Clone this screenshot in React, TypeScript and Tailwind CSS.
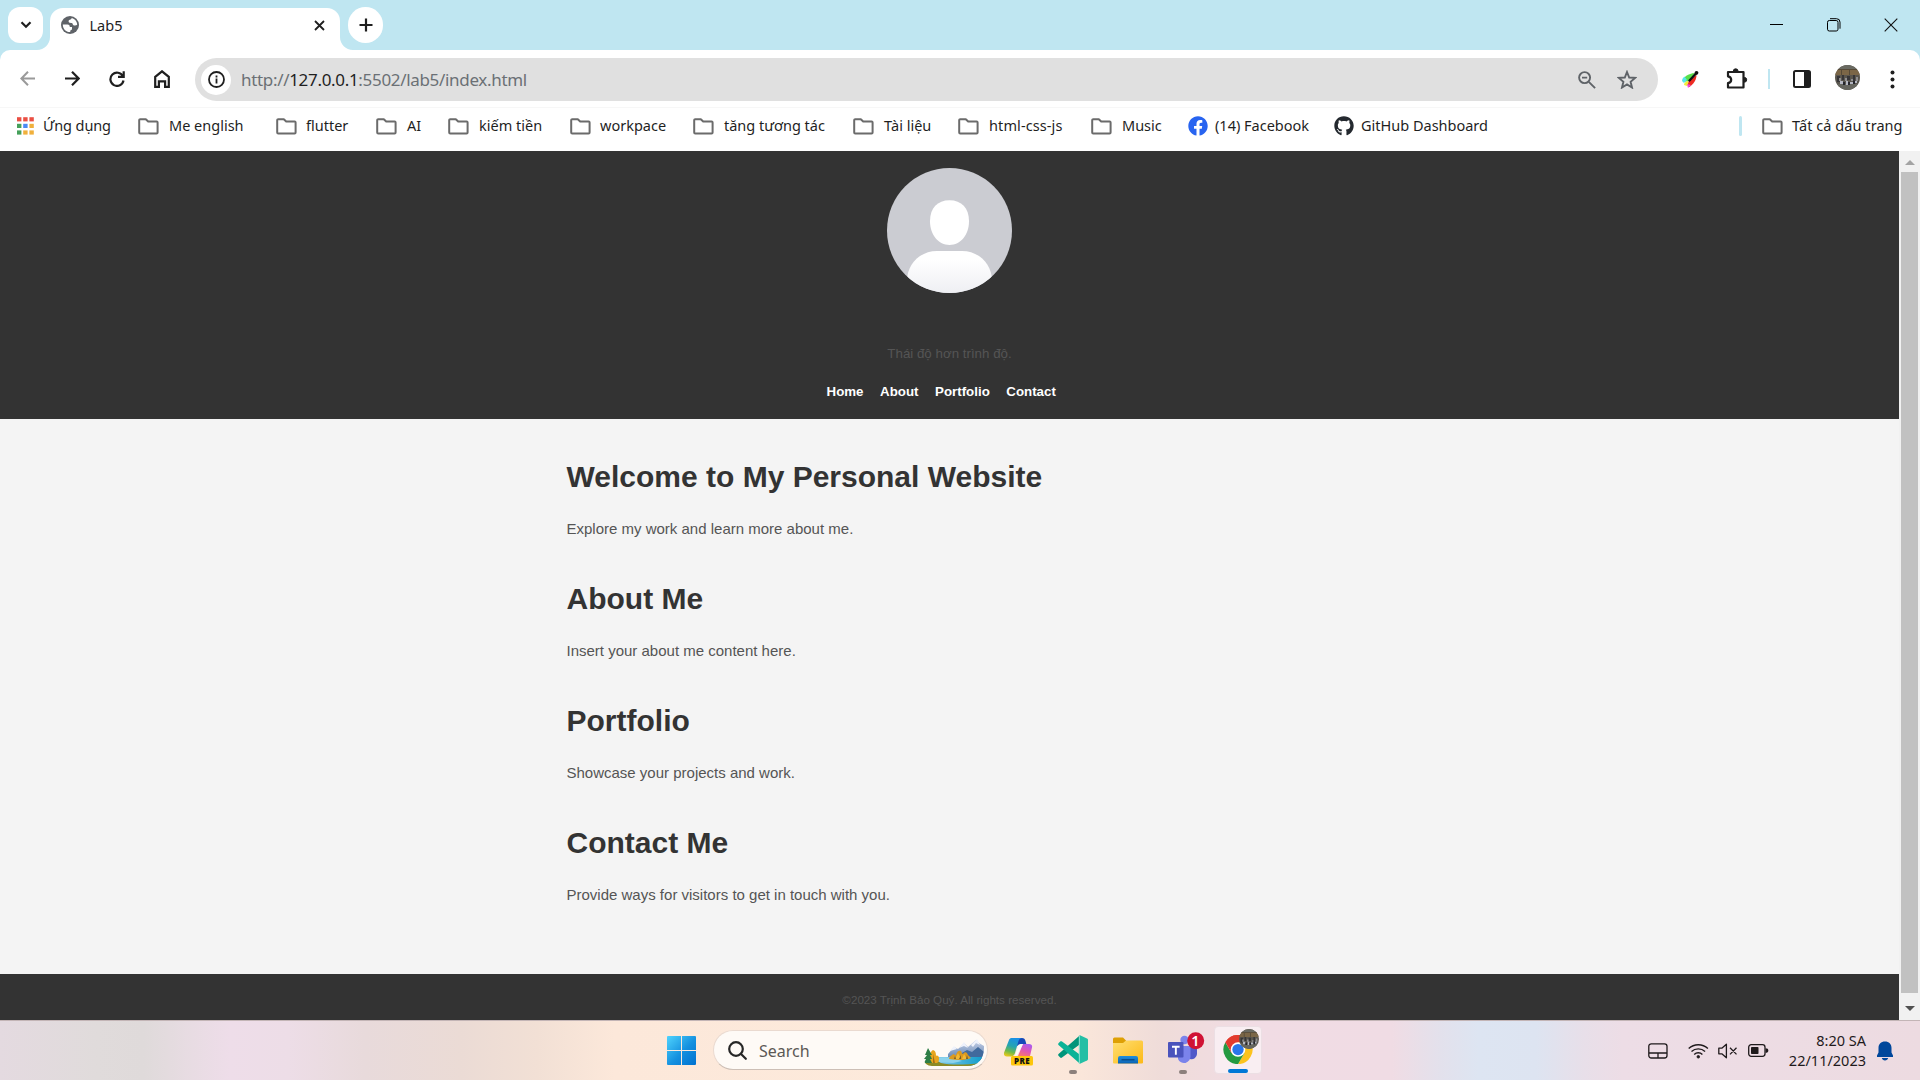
import React from "react";
import { FaFacebook, FaGithub } from "react-icons/fa";

const UI = "font-['Noto_Sans','Open_Sans',sans-serif]";

function Folder() {
  return (
    <svg width="21" height="17" viewBox="0 0 21 17" className="shrink-0" fill="none" stroke="#6b6b6b" strokeWidth="2" strokeLinejoin="round">
      <path d="M1.2 2.2a1 1 0 0 1 1-1h5.6l2.4 2.3h8.4a1 1 0 0 1 1 1v10a1 1 0 0 1-1 1H2.2a1 1 0 0 1-1-1z" />
    </svg>
  );
}

function AppsIcon() {
  const colors = ["#ea4f43", "#ea4f43", "#ea4f43", "#45a05a", "#4a8af4", "#f0b03c", "#45a05a", "#f0b03c", "#f0b03c"];
  return (
    <svg width="17" height="18" viewBox="0 0 17 18" className="shrink-0">
      {colors.map((c, i) => (
        <rect key={i} x={(i % 3) * 6.2} y={Math.floor(i / 3) * 6.6 + 0.2} width="4.4" height="4.2" fill={c} />
      ))}
    </svg>
  );
}

function Globe() {
  return (
    <svg className="mt-[8px]" width="18" height="18" viewBox="0 0 18 18">
      <circle cx="9" cy="9" r="9" fill="#5f6368" />
      <path d="M1.800 8.500h4.700c1.800 0 2.300 1 2.300 2.500H11v2.800c-1.200 0-1.800.6-1.800 2.300-4.200.2-7.400-3.200-7.400-7.600z" fill="#fff" />
      <path d="M10.800 2c3.200.8 5.300 3.600 5.400 6.700-.9 1-3.300 1.200-4.200 0-.4-.6-.3-1.500-1.200-1.700-1.300-.2-3.200.3-3.200-1.700 0-1.300 1-1.500 1.900-1.700.6-.2.900-.8 1.300-1.600z" fill="#fff" />
    </svg>
  );
}

type Mark = { label: string; icon: "apps" | "folder" | "fb" | "gh"; box: string; text: string };

const marks: Mark[] = [
  { label: "Ứng dụng", icon: "apps", box: "w-[121px] gap-[9px]", text: "tracking-[-0.1px]" },
  { label: "Me english", icon: "folder", box: "w-[138px] gap-[10px]", text: "" },
  { label: "flutter", icon: "folder", box: "w-[100px] gap-[9px]", text: "" },
  { label: "AI", icon: "folder", box: "w-[72px] gap-[10px]", text: "" },
  { label: "kiếm tiền", icon: "folder", box: "w-[122px] gap-[10px]", text: "" },
  { label: "workpace", icon: "folder", box: "w-[123px] gap-[9px]", text: "" },
  { label: "tăng tương tác", icon: "folder", box: "w-[160px] gap-[10px]", text: "" },
  { label: "Tài liệu", icon: "folder", box: "w-[105px] gap-[10px]", text: "" },
  { label: "html-css-js", icon: "folder", box: "w-[133px] gap-[10px]", text: "tracking-[0.1px]" },
  { label: "Music", icon: "folder", box: "w-[97px] gap-[10px]", text: "" },
  { label: "(14) Facebook", icon: "fb", box: "w-[146px] gap-[7px]", text: "" },
  { label: "GitHub Dashboard", icon: "gh", box: "gap-[7px]", text: "" },
];

function Bookmark({ m }: { m: Mark }) {
  return (
    <div className={`flex shrink-0 items-center whitespace-nowrap ${m.box}`}>
      {m.icon === "apps" && <AppsIcon />}
      {m.icon === "folder" && <Folder />}
      {m.icon === "fb" && <FaFacebook size={20} color="#2864f0" className="shrink-0" />}
      {m.icon === "gh" && <FaGithub size={20} color="#24292f" className="shrink-0" />}
      <span className={m.text}>{m.label}</span>
    </div>
  );
}

function TabStrip() {
  return (
    <div className="flex h-[50px] items-start bg-[#bfe6f1] pl-2">
      <button className="mt-[7px] flex h-9 w-[35px] items-center justify-center rounded-[12px] bg-white">
        <svg width="12" height="8" viewBox="0 0 12 8" fill="none" stroke="#1f1f1f" strokeWidth="2.2">
          <path d="M1.5 1.3 6 5.8l4.500-4.500" />
        </svg>
      </button>
      <div className="relative ml-[7px] mt-[8px] flex h-[42px] w-[290px] items-start rounded-t-[13px] bg-white pl-[11px]">
        <svg className="absolute -left-[13px] bottom-0" width="13" height="13" viewBox="0 0 13 13">
          <path d="M13 0v13H0C7.200 13 13 7.200 13 0z" fill="#fff" />
        </svg>
        <svg className="absolute -right-[13px] bottom-0" width="13" height="13" viewBox="0 0 13 13">
          <path d="M0 0v13h13C5.800 13 0 7.200 0 0z" fill="#fff" />
        </svg>
        <Globe />
        <span className="ml-[10.500px] mt-[7px] text-[14.500px] leading-5 text-[#1f1f1f]">Lab5</span>
        <svg className="ml-auto mr-[15px] mt-[11.500px]" width="11" height="11" viewBox="0 0 11 11" stroke="#1f1f1f" strokeWidth="1.800">
          <path d="m1 1 9 9M10 1l-9 9" />
        </svg>
      </div>
      <button className="relative ml-2 mt-[7px] flex h-9 w-[35px] items-center justify-center rounded-full bg-white">
        <svg width="14" height="14" viewBox="0 0 14 14" stroke="#1f1f1f" strokeWidth="2.200">
          <path d="M7 .5v13M.5 7h13" />
        </svg>
      </button>
      <div className="ml-auto mr-[22px] mt-[18px] flex items-center gap-[43px]">
        <svg width="14" height="14" viewBox="0 0 14 14" stroke="#000" strokeWidth="1">
          <path d="M0 6.500h13" />
        </svg>
        <svg width="14" height="14" viewBox="0 0 14 14" fill="none" stroke="#000" strokeWidth="1">
          <rect x=".5" y="2.500" width="10.500" height="10.500" rx="1.800" />
          <path d="M3 .7h6.500a3.500 3.500 0 0 1 3.500 3.500v6.500" />
        </svg>
        <svg width="14" height="14" viewBox="0 0 14 14" stroke="#111" strokeWidth="1.100">
          <path d="m.7.7 12.600 12.600M13.300.7.7 13.300" />
        </svg>
      </div>
    </div>
  );
}

function ProfilePhoto({ className }: { className: string }) {
  return (
    <svg viewBox="0 0 25 25" className={className}>
      <defs>
        <clipPath id="photoClip">
          <circle cx="12.5" cy="12.5" r="12.5" />
        </clipPath>
      </defs>
      <g clipPath="url(#photoClip)">
        <rect width="25" height="25" fill="#5a564e" />
        <rect width="25" height="5" fill="#6a6a62" />
        <rect y="4" width="25" height="6" fill="#7b6647" />
        <path d="M0 4h25v1H0zM6 5h1v5H6zM14 5h1v5h-1z" fill="#564a38" />
        <path d="M2 11h3v6H2zM7 10h2v5H7zM12 11h3v4h-3zM18 10h2v6h-2z" fill="#373638" />
        <path d="M4 13h2v3H4zM10 13h2v3h-2zM16 14h2v2h-2zM21 12h2v4h-2z" fill="#8f8e90" />
        <path d="M0 19h25v6H0z" fill="#66665f" />
        <path d="M5 16h3v3H5zM11 16h2v4h-2zM15 17h3v2h-3zM20 16h2v2h-2z" fill="#b5b7c2" />
        <path d="M8 17h2v3H8zM13 17h2v3h-2zM18 16h2v3h-2z" fill="#25262d" />
      </g>
    </svg>
  );
}

function Toolbar() {
  return (
    <div className="bg-[#bfe6f1]">
      <div className="flex h-[57px] items-center rounded-t-[10px] bg-white pl-5">
        <div className="flex w-[175px] shrink-0 items-center">
          <svg width="15" height="15" viewBox="0 0 15 15" fill="none" stroke="#9a9a9a" strokeWidth="2">
            <path d="M15 7.500H1.500M8 .8 1.400 7.500 8 14.200" />
          </svg>
          <svg className="ml-[30px]" width="15" height="15" viewBox="0 0 15 15" fill="none" stroke="#1f1f1f" strokeWidth="2.200">
            <path d="M0 7.500h13.500M7 .8l6.600 6.700L7 14.200" />
          </svg>
          <svg className="ml-[29px]" width="16" height="16" viewBox="0 0 16 16" fill="none" stroke="#1f1f1f" strokeWidth="2.200">
            <path d="M13.900 5.300A6.600 6.600 0 1 0 14.500 9.500M14.700.3v5.600H9" />
          </svg>
          <svg className="ml-[29px]" width="16" height="18" viewBox="0 0 16 18" fill="none" stroke="#1f1f1f" strokeWidth="2.200">
            <path d="M1.200 6.800 8 1.300l6.800 5.500v10h-3.700v-5.500H4.900v5.500H1.200z" />
          </svg>
        </div>
        <div className="mt-[2px] flex h-[43px] w-[1463px] shrink-0 items-center rounded-full bg-[#e0e0e0] pl-[6px]">
          <div className="flex h-[30px] w-[30px] items-center justify-center rounded-full bg-white">
            <svg width="17" height="17" viewBox="0 0 17 17" fill="none" stroke="#1f1f1f" strokeWidth="1.800">
              <circle cx="8.500" cy="8.500" r="7.500" />
              <path d="M8.500 7.500v5M8.500 4.500v1.900" />
            </svg>
          </div>
          <span className="ml-[10px] whitespace-nowrap text-[17px] tracking-[-0.32px] text-[#6b7075]">
            http://<span className="text-[#1f1f1f]">127.0.0.1</span>:5502/lab5/index.html
          </span>
          <svg className="ml-auto" width="18" height="18" viewBox="0 0 18 18" fill="none" stroke="#5f6368" strokeWidth="1.900">
            <circle cx="6.600" cy="6.600" r="5.500" />
            <path d="m10.800 10.800 6.300 6.300M4 6.600h5.200" />
          </svg>
          <svg className="ml-[21px] mr-[21px]" width="20" height="19" viewBox="0 0 20 19" fill="none" stroke="#5f6368" strokeWidth="1.900">
            <path d="m10 2 2.200 5.500 5.900.4-4.500 3.900 1.400 5.700-5-3.100-5 3.100 1.400-5.700-4.500-3.900 5.900-.4z" />
          </svg>
        </div>
        <div className="mt-[1px] flex items-center pl-[23px]">
          <svg width="18" height="18" viewBox="0 0 18 18">
            <path d="M2 12C2 7 7 3.500 14 3L8 11z" fill="#59e04a" />
            <path d="M1 11c0-2 1-3 2.500-4.500L6 10l-3 3z" fill="#56e6e8" />
            <path d="M3 15c0-2 1-3 4-4l1 3-2 2z" fill="#f2ee3a" />
            <path d="M8 11 15.500 5c0 5-3 9-7 12-2 0-2-3-.5-6z" fill="#ee2b22" />
            <path d="M6 14l4 1-3 3z" fill="#f04ae0" />
            <path d="M15.500 3 8.500 10.500" stroke="#111" strokeWidth="2.400" strokeLinecap="round" />
            <circle cx="15.500" cy="2.800" r="1.900" fill="#111" />
          </svg>
          <svg className="ml-[27px]" width="22" height="22" viewBox="0 0 22 22" fill="none" stroke="#1f1f1f" strokeWidth="2.200" strokeLinejoin="round">
            <path d="M2 4h15.500v15.500H2v-4.300c2-.4 3.200-1.600 3.200-3.400S4 8.700 2 8.300z" />
            <path d="M7.300 3.200a2.400 2.400 0 0 1 4.800 0zM18.300 9.400a2.400 2.400 0 0 1 0 4.800z" fill="#1f1f1f" strokeWidth="1" />
          </svg>
          <div className="ml-5 h-5 w-[2px] bg-[#bfe6f1]" />
          <svg className="ml-[23px]" width="18" height="18" viewBox="0 0 18 18">
            <rect x="1" y="1" width="16" height="16" rx="1.500" fill="none" stroke="#1f1f1f" strokeWidth="2" />
            <path d="M11 1h6v16h-6z" fill="#1f1f1f" />
          </svg>
          <ProfilePhoto className="-mt-[3px] ml-6 h-[25px] w-[25px]" />
          <svg className="ml-[30px]" width="5" height="19" viewBox="0 0 5 19" fill="#1f1f1f">
            <circle cx="2.500" cy="2.500" r="2" />
            <circle cx="2.500" cy="9.500" r="2" />
            <circle cx="2.500" cy="16.500" r="2" />
          </svg>
        </div>
      </div>
    </div>
  );
}

function BookmarksBar() {
  return (
    <div className="flex h-11 items-center border-t border-[#f7f7f7] bg-white pb-[7px] pl-[17px] pr-[17px] text-[14.500px] text-[#1f1f1f]">
      {marks.map((m) => (
        <Bookmark key={m.label} m={m} />
      ))}
      <div className="ml-auto flex items-center whitespace-nowrap">
        <div className="mr-5 h-5 w-[3px] rounded bg-[#bfe6f1]" />
        <Folder />
        <span className="ml-[9px] w-[111px] tracking-[0.060px]">Tất cả dấu trang</span>
      </div>
    </div>
  );
}

function Avatar() {
  return (
    <svg width="125" height="125" viewBox="0 0 125 125">
      <defs>
        <clipPath id="avatarClip">
          <circle cx="62.5" cy="62.5" r="62.5" />
        </clipPath>
        <linearGradient id="body" x1="0" y1="0" x2="0" y2="1">
          <stop offset=".2" stopColor="#fff" />
          <stop offset="1" stopColor="#eeeff3" />
        </linearGradient>
      </defs>
      <g clipPath="url(#avatarClip)">
        <rect width="125" height="125" fill="#cbccd2" />
        <path d="M62.500 32.300c12 0 19.500 7.700 19.500 21 0 13.500-8.500 23.700-19.500 23.700S43 66.800 43 53.300c0-13.300 7.500-21 19.500-21z" fill="#fff" />
        <path d="M20 125v-12c0-17 13-30 30-30h25c17 0 30 13 30 30v12z" fill="url(#body)" />
      </g>
    </svg>
  );
}

const sections = [
  ["Welcome to My Personal Website", "Explore my work and learn more about me."],
  ["About Me", "Insert your about me content here."],
  ["Portfolio", "Showcase your projects and work."],
  ["Contact Me", "Provide ways for visitors to get in touch with you."],
];

function WebPage() {
  return (
    <div className="flex w-[1899px] flex-col bg-[#f4f4f4] font-['Liberation_Sans',Arial,sans-serif]">
      <header className="flex h-[268px] flex-col items-center bg-[#333] pt-[17px]">
        <Avatar />
        <p className="mt-[51px] text-[13.330px] leading-5 text-[#555]">Thái độ hơn trình độ.</p>
        <nav className="mt-[18px] flex text-[13.300px] font-bold leading-5 text-white">
          {["Home", "About", "Portfolio", "Contact"].map((n) => (
            <a key={n} className="mr-[16.600px]">{n}</a>
          ))}
        </nav>
      </header>
      <main className="flex grow flex-col gap-10 pl-[566.500px] pt-10">
        {sections.map(([title, body]) => (
          <section key={title}>
            <h1 className="text-[30px] font-bold leading-9 text-[#333]">{title}</h1>
            <p className="mt-[22px] text-[15px] leading-6 text-[#555]">{body}</p>
          </section>
        ))}
      </main>
      <footer className="h-[46px] bg-[#333] pt-[18px] text-center text-[11.650px] leading-4 text-[#555]">
        ©2023 Trịnh Bảo Quý. All rights reserved.
      </footer>
    </div>
  );
}

function Scrollbar() {
  return (
    <div className="flex w-[21px] flex-col items-center bg-[#f1f1f1]">
      <svg className="mt-[9px]" width="10" height="5" viewBox="0 0 10 5">
        <path d="M5 0 10 5H0z" fill="#a3a3a3" />
      </svg>
      <div className="mt-[7px] h-[821px] w-[17px] bg-[#c1c1c1]" />
      <svg className="mt-[13px]" width="10" height="5" viewBox="0 0 10 5">
        <path d="M0 0h10L5 5z" fill="#505050" />
      </svg>
    </div>
  );
}

function StartIcon() {
  return (
    <svg width="29" height="29" viewBox="0 0 29 29">
      <defs>
        <linearGradient id="win" x1="0" y1="0" x2="1" y2="1">
          <stop offset="0" stopColor="#4fd3fd" />
          <stop offset=".55" stopColor="#1490df" />
          <stop offset="1" stopColor="#0071d0" />
        </linearGradient>
      </defs>
      <path d="M1 0h13v14H0V1a1 1 0 0 1 1-1zM15 0h13a1 1 0 0 1 1 1v13H15zM0 15h14v14H1a1 1 0 0 1-1-1zM15 15h14v13a1 1 0 0 1-1 1H15z" fill="url(#win)" />
    </svg>
  );
}

function Scenery() {
  return (
    <svg width="60" height="27" viewBox="0 0 60 27">
      <defs>
        <clipPath id="pill">
          <path d="M0 0h60v8c0 12-6 19-17 19H8C3 27 0 24 0 20z" />
        </clipPath>
        <linearGradient id="mount" x1="0" y1="0" x2="0" y2="1">
          <stop offset="0" stopColor="#c9d2e8" />
          <stop offset="1" stopColor="#5a7eae" />
        </linearGradient>
        <linearGradient id="lake" x1="0" y1="0" x2="1" y2="0">
          <stop offset="0" stopColor="#8fcdea" />
          <stop offset="1" stopColor="#0e9ccb" />
        </linearGradient>
      </defs>
      <g clipPath="url(#pill)">
        <path d="M24 15l6-7 4 2 6-6 4 4 8-7 3 3 5 3v14H24z" fill="url(#mount)" />
        <path d="M26 12l4-5 3 3zM35 9l5-6 4 6-4-2zM47 6l6-6 3 6-4-2-3 4z" fill="#eff2fb" />
        <path d="M38 14 43 11l5 2 6-5 6 5v9H38z" fill="#416a9d" />
        <path d="M14 18h46v9H8z" fill="url(#lake)" />
        <path d="M14 19c8-2 16 0 24 3l-9 2-17-1z" fill="#8dd3ec" />
        <path d="M25 20c1-4 3-3 4-5 2 0 2 2 3 1 1-4 3-5 5-4 1 2 1 3 2 3 2-3 4-2 5 1l3 3c-7 3-15 2-22 1z" fill="#dc9a1f" />
        <path d="M31 20l3-6 3 6zM38 20l2-5 3 5z" fill="#f2b935" />
        <path d="M35 20h2v-4zM42 20h2l-1-4zM30 20l1-3 1 3z" fill="#755b2a" />
        <path d="M0 27v-4c6-2 12-2 17 1 10 2 22 2 40 0v3z" fill="#8c8a25" />
        <path d="M6 24c-1-5 0-12 3-13 3 1 3 4 3 6 1-1 3 0 3 2s0 4-2 5z" fill="#e7a51f" />
        <path d="M9 24v-9l2 9z" fill="#a56e16" />
        <path d="M4 9 8 16H6l2 4H6l2 4H0l2-4H0l3-4H1z" fill="#2e7d46" />
      </g>
    </svg>
  );
}

function CopilotIcon() {
  return (
    <svg width="30" height="29" viewBox="0 0 30 29">
      <defs>
        <linearGradient id="cpa" x1=".6" y1="0" x2=".3" y2="1">
          <stop offset="0" stopColor="#1a8fe8" />
          <stop offset=".45" stopColor="#25a5b0" />
          <stop offset=".75" stopColor="#6fb94b" />
          <stop offset="1" stopColor="#e4c81b" />
        </linearGradient>
        <linearGradient id="cpb" x1=".8" y1="0" x2=".3" y2="1">
          <stop offset="0" stopColor="#a95cf0" />
          <stop offset=".5" stopColor="#dc55b8" />
          <stop offset="1" stopColor="#f9786a" />
        </linearGradient>
      </defs>
      <path d="M13 1h5c2 0 3 1 3.500 3l.8 3H17l-4 2z" fill="#1748b8" />
      <path d="M5 3c.6-1.500 1.500-2 3-2h10c-2 .3-3 1.500-3.500 3L11 16c-.6 2-2 3.500-4 3.500H3c-2.500 0-3.500-1.800-3-3.800z" fill="url(#cpa)" />
      <path d="M19 7h6c2.500 0 3.500 1.500 3 3.500L26 19H11c2-.3 2.800-1.500 3.300-3z" fill="url(#cpb)" />
      <path d="M14 8.500c.4-1 1.500-1.500 3-1.500h2l-5 12h-3z" fill="#fff" fillOpacity=".8" />
      <rect x="7" y="19" width="22" height="9.500" rx="1.500" fill="#fdc60b" />
      <text x="18" y="26.500" textAnchor="middle" fontSize="8" fontWeight="800" letterSpacing=".3" fontFamily="Open Sans, sans-serif" fill="#111">PRE</text>
    </svg>
  );
}

function CodeIcon() {
  return (
    <svg width="30" height="29" viewBox="0 0 30 29">
      <path d="M22 .3v9L4 22.500c-.6.500-1.300.500-1.800 0L.5 20.800c-.5-.5-.5-1.200 0-1.700z" fill="#00957a" />
      <path d="M22 28.700v-9L4 6.500c-.6-.5-1.300-.5-1.800 0L.5 8.200c-.5.500-.5 1.200 0 1.700z" fill="#0bb397" />
      <path d="M22 .3 29 3.500c.6.300 1 .8 1 1.500v19c0 .7-.4 1.200-1 1.500l-7 3.200z" fill="#24bfa5" />
      <path d="M20.800.8c.4-.4 1.200-.5 1.200.2v27c0 .7-.8.600-1.200.2z" fill="#7fdccb" />
    </svg>
  );
}

function ExplorerIcon() {
  return (
    <svg width="30" height="27" viewBox="0 0 30 27">
      <defs>
        <linearGradient id="fold" x1="0" y1="0" x2="1" y2="1">
          <stop offset="0" stopColor="#ffdf72" />
          <stop offset="1" stopColor="#fcb916" />
        </linearGradient>
        <linearGradient id="pocket" x1="0" y1="0" x2="0" y2="1">
          <stop offset="0" stopColor="#1f8fdc" />
          <stop offset="1" stopColor="#0b62b3" />
        </linearGradient>
      </defs>
      <path d="M0 2A1.500 1.500 0 0 1 1.500.5H10l3 3V8H0z" fill="#dea005" />
      <path d="M0 6h10l3-2.500h15.500A1.500 1.500 0 0 1 30 5v20.500a1 1 0 0 1-1 1H1a1 1 0 0 1-1-1z" fill="url(#fold)" />
      <path d="M5 26.500V21a2 2 0 0 1 2-2h16a2 2 0 0 1 2 2v5.500z" fill="url(#pocket)" />
      <path d="M8.500 22.800h13" stroke="#07457f" strokeWidth="1.200" />
    </svg>
  );
}

function TeamsIcon() {
  return (
    <svg width="37" height="32" viewBox="0 0 37 32">
      <circle cx="16.500" cy="8" r="4.200" fill="#7b83eb" />
      <path d="M20 14h9v8a5.500 5.500 0 0 1-7 5z" fill="#5059c9" />
      <path d="M10 14h12.500v10a6.500 6.500 0 0 1-12.500 3z" fill="#7b83eb" />
      <rect y="10" width="15.500" height="15.500" rx="1" fill="#4a53bc" />
      <path d="M4 13.800h7.600v1.900H8.800v7.100H6.900v-7.100H4z" fill="#fff" />
      <circle cx="27.700" cy="8.700" r="8.500" fill="#d01234" />
      <text x="27.500" y="13.800" textAnchor="middle" fontSize="14.500" fontWeight="600" fontFamily="Noto Sans, sans-serif" fill="#fff">1</text>
    </svg>
  );
}

function ChromeIcon() {
  return (
    <svg width="30" height="30" viewBox="0 0 48 48">
      <path d="M24 24 3.200 12A24 24 0 0 1 44.800 12z" fill="#e33b2e" />
      <path d="M24 24V12h20.800A24 24 0 0 1 24 48l10.400-18z" fill="#fcc31e" />
      <path d="M24 24 34.400 30 24 48A24 24 0 0 1 3.200 12l10.400 18z" fill="#249a41" />
      <path d="M3.200 12 13.600 30 24 24V12h20.800A24 24 0 0 0 3.200 12z" fill="#e33b2e" />
      <circle cx="24" cy="24" r="12" fill="#fff" />
      <circle cx="24" cy="24" r="9.300" fill="#2a76ea" />
    </svg>
  );
}

function Taskbar() {
  return (
    <div className="flex h-[60px] border-t border-[#c3b5b6] bg-[linear-gradient(90deg,#e4dae0_0%,#e0dbdb_5%,#dfdada_7.500%,#e8dce3_10%,#eedde9_12%,#eddde7_15%,#e8dadb_19%,#ebdbd5_24%,#f2e0d5_28%,#fce8da_32%,#fdeadb_50%,#fbe7da_56%,#efdcd9_60.500%,#f1dce4_65%,#f0dce4_72.500%,#e3e1ec_75%,#dde5f2_77%,#dde4f1_80%,#e8dfe9_82.500%,#eddde6_84.500%,#eddbe1_100%)] pl-[667px]">
      <div className="mt-[15px] w-[46px] shrink-0"><StartIcon /></div>
      <div className="mt-[9px] flex h-[40px] w-[275px] shrink-0 items-center rounded-full border border-b-[#cdbfb6] border-[#eadad0] bg-[#fefaf6] pl-[14px] pr-[3px]">
        <svg width="19" height="19" viewBox="0 0 19 19" fill="none" stroke="#262626" strokeWidth="2.200">
          <circle cx="8" cy="8" r="6.800" />
          <path d="m12.800 12.800 5 5" strokeLinecap="round" />
        </svg>
        <span className="ml-[12px] mt-[2px] text-[16px] text-[#5c5855]">Search</span>
        <div className="ml-auto mt-[5px]"><Scenery /></div>
      </div>
      <div className="ml-4 mt-4 w-[54px] shrink-0"><CopilotIcon /></div>
      <div className="mt-[14px] flex w-[55px] shrink-0 flex-col">
        <CodeIcon />
        <div className="ml-[11px] mt-[6px] h-1 w-2 rounded-full bg-[#8c807c]" />
      </div>
      <div className="mt-4 w-[55px] shrink-0"><ExplorerIcon /></div>
      <div className="mt-[11px] flex w-[46px] shrink-0 flex-col">
        <TeamsIcon />
        <div className="ml-[11px] mt-[6px] h-1 w-2 rounded-full bg-[#8c807c]" />
      </div>
      <div className="relative mt-[5px] flex h-[48px] w-[48px] shrink-0 flex-col items-center rounded border border-[#ecdfe4] bg-[#f9eef2] pt-[8px]">
        <ChromeIcon />
        <ProfilePhoto className="absolute right-[2px] top-[2px] h-5 w-5" />
        <div className="mt-[5px] h-1 w-5 rounded-full bg-[#0078d7]" />
      </div>
      <div className="ml-auto mr-[27px] flex items-center">
        <svg width="20" height="16" viewBox="0 0 20 16" fill="none" stroke="#1f1a1c" strokeWidth="1.300">
          <rect x=".8" y=".8" width="18.200" height="14.200" rx="2.500" />
          <path d="M1 10h18M10 10v5" />
        </svg>
        <svg className="ml-5" width="21" height="16" viewBox="0 0 21 16" fill="none" stroke="#1f1a1c" strokeWidth="1.400">
          <path d="M.7 5.500a14 14 0 0 1 19.200 0M3.500 8.500a10 10 0 0 1 13.600 0M6.200 11.400a6 6 0 0 1 8.200 0" />
          <circle cx="10.300" cy="13.800" r="1.300" fill="#1f1a1c" strokeWidth=".8" />
        </svg>
        <svg className="ml-[9px]" width="20" height="16" viewBox="0 0 20 16" fill="none" stroke="#1f1a1c" strokeWidth="1.300">
          <path d="M.8 5.200h3L8.400 1.200v13.600L3.800 10.800h-3zM12 4.800l6.500 6.600M18.500 4.800 12 11.400" strokeLinejoin="round" />
        </svg>
        <svg className="ml-[10px]" width="21" height="13" viewBox="0 0 21 13">
          <rect x=".7" y=".7" width="16.300" height="11.600" rx="2.500" fill="none" stroke="#1f1a1c" strokeWidth="1.300" />
          <rect x="3" y="3" width="7.500" height="7" rx=".8" fill="#1f1a1c" />
          <path d="M17.500 4.200c2 0 2.800.8 2.800 2.300s-.8 2.300-2.800 2.300z" fill="#1f1a1c" />
        </svg>
        <div className="-mt-[2px] ml-[18px] flex w-[79px] flex-col items-end whitespace-nowrap text-[14.500px] leading-5 text-[#1f1a1c]">
          <span>8:20 SA</span>
          <span>22/11/2023</span>
        </div>
        <svg className="ml-[11px]" width="16" height="20" viewBox="0 0 16 20" fill="#00479b">
          <path d="M8 .5c4 0 6.500 2.700 6.500 6.300v4.700l1.500 3v1.500H0v-1.500l1.500-3V6.800C1.500 3.200 4 .5 8 .5zM4.800 17h6.400c-.4 1.600-1.600 2.500-3.200 2.500S5.200 18.600 4.800 17z" />
        </svg>
      </div>
    </div>
  );
}

export default function App() {
  return (
    <div className={`flex h-[1080px] w-[1920px] flex-col overflow-hidden bg-white ${UI}`}>
      <TabStrip />
      <Toolbar />
      <BookmarksBar />
      <div className="flex h-[869px]">
        <WebPage />
        <Scrollbar />
      </div>
      <Taskbar />
    </div>
  );
}
